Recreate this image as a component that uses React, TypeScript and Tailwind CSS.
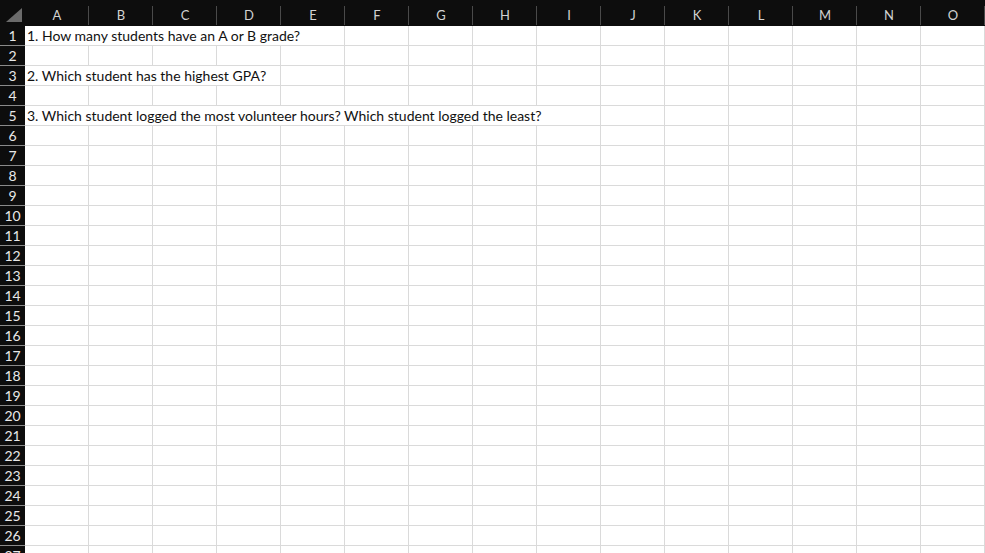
const COLS = ["A", "B", "C", "D", "E", "F", "G", "H", "I", "J", "K", "L", "M", "N", "O"];

// text that spills over neighbouring cells: row number -> [text, columns covered]
const ENTRIES: Record<number, [string, number]> = {
  1: ["1. How many students have an A or B grade?", 5],
  3: ["2. Which student has the highest GPA?", 4],
  5: ["3. Which student logged the most volunteer hours? Which student logged the least?", 9],
};

const ROWS = Array.from({length: 27}, (_, i) => i + 1);

const colSpan: Record<number, string> = {
  4: "col-span-4",
  5: "col-span-5",
  9: "col-span-9",
};

function Row({n}: {n: number}) {
  const entry = ENTRIES[n];
  const cells = [];
  if (entry) {
    const [text, span] = entry;
    cells.push(
      <div
        key="t"
        className={`${colSpan[span]} h-[20px] border-r border-b border-[#dadada] bg-white pl-[2px] text-[14px] leading-[20px] text-[#111] whitespace-nowrap overflow-visible`}
      >
        {text}
      </div>
    );
    for (let i = span; i < COLS.length; i++) {
      cells.push(<div key={i} className="h-[20px] border-r border-b border-[#dadada] bg-white"/>);
    }
  } else {
    for (let i = 0; i < COLS.length; i++) {
      cells.push(<div key={i} className="h-[20px] border-r border-b border-[#dadada] bg-white"/>);
    }
  }
  return (
    <div className="flex">
      <div className="w-[25px] h-[20px] shrink-0 bg-[#0d0d0d] border-b border-[#8a8a8a] text-center text-[14px] leading-[20px] text-[#e8e8e8]">
        {n}
      </div>
      <div className="grid grid-cols-[repeat(15,64px)]">{cells}</div>
    </div>
  );
}

export default function App() {
  return (
    <div className="w-[985px] h-[553px] overflow-hidden bg-white" style={{fontFamily: "Lato, 'Open Sans', sans-serif"}}>
      {/* column letters */}
      <div className="flex h-[26px] bg-[#0d0d0d]">
        <div className="w-[25px] shrink-0 flex items-end justify-end pr-[3px] pb-[4px]">
          <svg width="16" height="14" viewBox="0 0 16 14">
            <polygon points="16,0 16,14 0,14" fill="#6b6b6b"/>
          </svg>
        </div>
        {COLS.map(c => (
          <div key={c} className="w-[64px] shrink-0 relative text-center text-[13px] leading-[30px] text-[#d2d2d2]">
            {c}
            <span className="absolute right-0 top-[6px] bottom-[1px] w-px bg-[#4a4a4a]"/>
          </div>
        ))}
      </div>
      {ROWS.map(n => <Row key={n} n={n}/>)}
    </div>
  );
}
